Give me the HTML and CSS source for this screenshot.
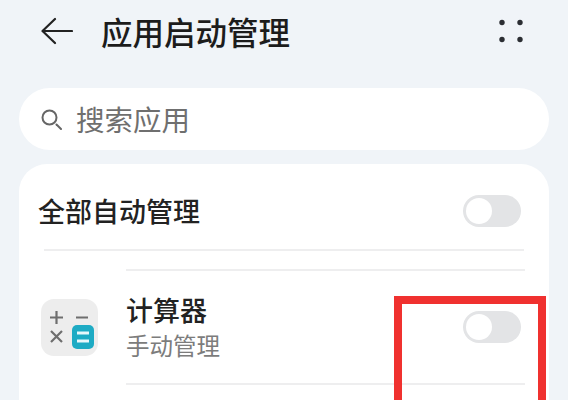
FILE: index.html
```html
<!DOCTYPE html>
<html lang="zh-CN">
<head>
<meta charset="utf-8">
<title>应用启动管理</title>
<link rel="stylesheet" href="styles.css">
</head>
<body>
<div class="page">
  <header class="topbar">
    <svg class="back" viewBox="0 0 32 28" width="32" height="28" aria-hidden="true"><path d="M31 14H2M14 2 1.500 14 14 26" fill="none" stroke="#222" stroke-width="2.200" stroke-linecap="round" stroke-linejoin="round"/></svg>
    <h1 class="title">应用启动管理</h1>
    <svg class="more" viewBox="0 0 24 24" width="24" height="24" aria-hidden="true"><circle cx="3" cy="3.500" r="2.700"/><circle cx="21" cy="3.500" r="2.700"/><circle cx="3" cy="20.500" r="2.700"/><circle cx="21" cy="20.500" r="2.700"/></svg>
  </header>
  <div class="search">
    <svg class="search-icon" viewBox="0 0 21 21" width="21" height="21" aria-hidden="true"><circle cx="8.500" cy="8.500" r="7" fill="none" stroke="#666" stroke-width="2"/><path d="M15.500 15.500 20 20" stroke="#666" stroke-width="2" stroke-linecap="round"/></svg>
    <span class="search-text">搜索应用</span>
  </div>
  <section class="card">
    <div class="all-row">
      <span class="all-label">全部自动管理</span>
      <span class="toggle"><span class="knob"></span></span>
    </div>
    <div class="sep"></div>
    <div class="app-row">
      <svg class="app-icon" viewBox="0 0 57 57" width="57" height="57" aria-hidden="true">
        <rect width="57" height="57" rx="13" fill="#ededed"/>
        <path d="M9 18.500H22M15.500 12V25M35 18.500H47M10 32 21 43M21 32 10 43" stroke="#6e6e6e" stroke-width="2.200" fill="none"/>
        <rect x="31" y="26" width="22" height="24" rx="5" fill="#1eabc4"/>
        <path d="M36 34H48M36 42H48" stroke="#e8f8fb" stroke-width="3"/>
      </svg>
      <div class="app-body">
        <div class="app-text">
          <span class="app-name">计算器</span>
          <span class="app-sub">手动管理</span>
        </div>
        <span class="toggle"><span class="knob"></span></span>
      </div>
    </div>
  </section>
  <div class="redbox"></div>
</div>
</body>
</html>
```
FILE: styles.css
```css
html, body {
  margin: 0;
  padding: 0;
}
body {
  width: 568px;
  height: 400px;
  overflow: hidden;
  background: #f0f4f8;
  font-family: "Noto Sans CJK SC", "Noto Sans", sans-serif;
}
.page {
  position: relative;
  width: 568px;
  height: 400px;
  overflow: hidden;
  box-sizing: border-box;
  padding: 0 19px;
}
.topbar {
  display: flex;
  align-items: center;
  height: 62px;
  padding-left: 22px;
}
.back {
  flex: none;
}
.title {
  margin: 1px 0 0 28px;
  font-size: 31.500px;
  font-weight: 500;
  color: #1c1c1c;
  line-height: 1;
}
.more {
  margin-left: auto;
  margin-right: 26px;
  fill: #2b2e33;
  width: 24px;
  height: 24px;
}
.search {
  display: flex;
  align-items: center;
  height: 62px;
  margin-top: 26px;
  padding-left: 22px;
  background: #fff;
  border-radius: 31px;
}
.search-text {
  margin-left: 14px;
  font-size: 28.500px;
  color: #6f6f6f;
  line-height: 1;
}
.card {
  margin-top: 14px;
  height: 300px;
  background: #fff;
  border-radius: 28px;
}
.all-row {
  display: flex;
  align-items: center;
  justify-content: space-between;
  height: 94px;
  padding: 0 28px 0 19px;
  box-sizing: border-box;
}
.all-label {
  margin-bottom: 2px;
  font-size: 27px;
  font-weight: 500;
  color: #222;
  line-height: 1;
}
.toggle {
  display: block;
  flex: none;
  position: relative;
  width: 58px;
  height: 32px;
  border-radius: 16px;
  background: #e3e4e6;
}
.knob {
  position: absolute;
  top: 3px;
  left: 3px;
  width: 26px;
  height: 26px;
  border-radius: 50%;
  background: #fff;
}
.sep {
  height: 2px;
  margin: -9px 25px 0;
  background: #eeeeef;
}
.app-row {
  display: flex;
  align-items: center;
  margin-top: 18px;
  padding-left: 22px;
}
.app-icon {
  flex: none;
  margin-right: 28px;
}
.app-body {
  flex: 1;
  display: flex;
  align-items: center;
  justify-content: space-between;
  height: 116px;
  margin-right: 24px;
  padding-right: 4px;
  box-sizing: border-box;
  border-top: 2px solid #eeeeef;
  border-bottom: 2px solid #eeeeef;
}
.app-text {
  display: flex;
  flex-direction: column;
  gap: 11px;
}
.app-name {
  font-size: 27px;
  font-weight: 500;
  color: #222;
  line-height: 1;
}
.app-sub {
  font-size: 23.500px;
  color: #7c7c7c;
  line-height: 1;
}
.redbox {
  position: absolute;
  left: 394px;
  top: 296px;
  width: 152px;
  height: 130px;
  box-sizing: border-box;
  border: 8px solid #f0312f;
}
```
